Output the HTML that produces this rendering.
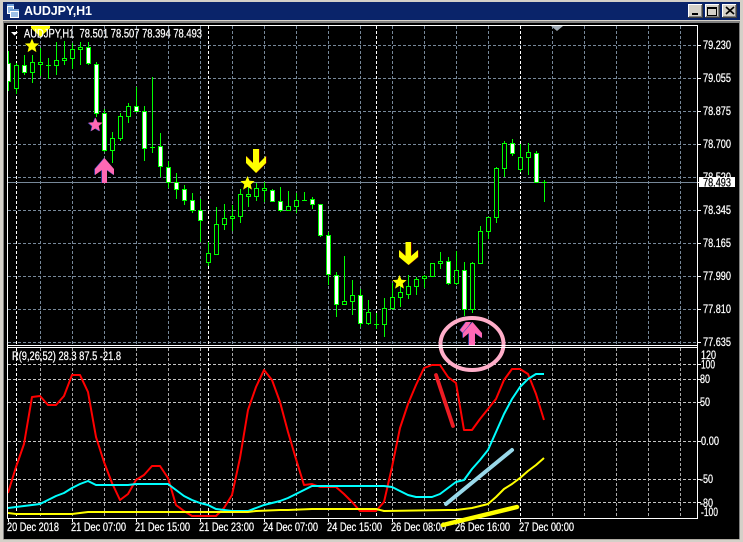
<!DOCTYPE html>
<html><head><meta charset="utf-8"><title>AUDJPY,H1</title>
<style>
html,body{margin:0;padding:0;width:743px;height:542px;overflow:hidden;background:#d4d0c8}
svg{display:block}
text{font-family:"Liberation Sans",sans-serif;font-size:11.500px;fill:#fff;stroke:#fff;stroke-width:.25px}
.c{shape-rendering:crispEdges}
</style></head><body>
<svg width="743" height="542" viewBox="0 0 743 542" xmlns="http://www.w3.org/2000/svg">
<defs>
<clipPath id="m"><rect x="8" y="26" width="689" height="319"/></clipPath>
<clipPath id="s"><rect x="8" y="348" width="689" height="170"/></clipPath>
<polygon id="star" points="0,-7.500 2,-2.750 7.130,-2.320 3.230,1.050 4.410,6.070 0,3.400 -4.410,6.070 -3.230,1.050 -7.130,-2.320 -2,-2.750"/>
</defs>
<rect width="743" height="542" fill="#d4d0c8"/>
<rect x="3" y="2" width="737" height="18" fill="#0a246a"/>
<rect x="3" y="20" width="737" height="1" fill="#d4d0c8"/>
<rect x="3" y="21" width="737" height="2" fill="#808080"/>
<rect x="3" y="22" width="1" height="517" fill="#808080"/>
<rect x="739" y="22" width="1" height="517" fill="#808080"/>
<rect x="4" y="23" width="735" height="516" fill="#000"/>
<rect x="3" y="539" width="737" height="1" fill="#b0aca4"/>

<!-- title icon -->
<g class="c">
<rect x="7" y="4" width="7" height="10" fill="#fff"/>
<rect x="7" y="4" width="7" height="2" fill="#6f9fd8"/>
<rect x="8" y="7" width="5" height="6" fill="#8fb7e4"/>
<rect x="10" y="9" width="9" height="9" fill="#fff"/>
<rect x="10" y="9" width="9" height="2" fill="#6f9fd8"/>
<rect x="11" y="12" width="7" height="5" fill="#9cc0e8"/>
</g>
<text x="24" y="15" textLength="68" style="font-weight:bold;font-size:12.500px;stroke-width:0">AUDJPY,H1</text>

<!-- buttons -->
<g class="c">
<rect x="688" y="4" width="15" height="14" fill="#404040"/><rect x="688" y="4" width="14" height="13" fill="#fff"/><rect x="689" y="5" width="13" height="12" fill="#808080"/><rect x="689" y="5" width="12" height="11" fill="#d4d0c8"/>
<rect x="692" y="13" width="6" height="2" fill="#000"/>
<rect x="705" y="4" width="15" height="14" fill="#404040"/><rect x="705" y="4" width="14" height="13" fill="#fff"/><rect x="706" y="5" width="13" height="12" fill="#808080"/><rect x="706" y="5" width="12" height="11" fill="#d4d0c8"/>
<path d="M707.500 8.500h9v7h-9z" fill="none" stroke="#000"/><rect x="707" y="7" width="10" height="2" fill="#000"/>
<rect x="722" y="4" width="15" height="14" fill="#404040"/><rect x="722" y="4" width="14" height="13" fill="#fff"/><rect x="723" y="5" width="13" height="12" fill="#808080"/><rect x="723" y="5" width="12" height="11" fill="#d4d0c8"/>
</g>
<path d="M726 7l8 7M734 7l-8 7" stroke="#000" stroke-width="1.700" fill="none"/>

<!-- grid main -->
<g class="c" clip-path="url(#m)" fill="none">
<path stroke="#778899" stroke-dasharray="3 2" d="M8 45.500H697M8 78.500H697M8 111.500H697M8 144.500H697M8 177.500H697M8 210.500H697M8 243.500H697M8 276.500H697M8 309.500H697M8 342.500H697"/>
<path stroke="#778899" stroke-dasharray="3 2" d="M40.500 26V345M72.500 26V345M104.500 26V345M136.500 26V345M168.500 26V345M200.500 26V345M232.500 26V345M264.500 26V345M296.500 26V345M328.500 26V345M360.500 26V345M392.500 26V345M424.500 26V345M456.500 26V345M488.500 26V345M552.500 26V345M584.500 26V345M616.500 26V345M648.500 26V345M680.500 26V345"/>
<path stroke="#fff" stroke-dasharray="3 2" d="M16.500 26V345M208.500 26V345M376.500 26V345M520.500 26V345"/>
<path stroke="#778899" d="M8 182.500H697"/>
</g>
<!-- grid sub -->
<g class="c" clip-path="url(#s)" fill="none">
<path stroke="#c4c4c4" stroke-dasharray="3 2" d="M8 364.500H697M8 379.500H697M8 402.500H697M8 441.500H697M8 479.500H697M8 502.500H697"/>
<path stroke="#a8a8a8" stroke-dasharray="3 2" d="M40.500 348V518M72.500 348V518M104.500 348V518M136.500 348V518M168.500 348V518M200.500 348V518M232.500 348V518M264.500 348V518M296.500 348V518M328.500 348V518M360.500 348V518M392.500 348V518M424.500 348V518M456.500 348V518M488.500 348V518M552.500 348V518M584.500 348V518M616.500 348V518M648.500 348V518M680.500 348V518"/>
<path stroke="#fff" stroke-dasharray="3 2" d="M16.500 348V518M208.500 348V518M376.500 348V518M520.500 348V518"/>
</g>

<!-- candles -->
<g class="c" clip-path="url(#m)">
<path fill="none" stroke="#00ff00" d="M8.500 51V91M16.500 63V94M24.500 55V75M32.500 55V83M40.500 48V76M48.500 58V79M56.500 42V75M64.500 41V65M72.500 43V69M80.500 42V65M88.500 42V65M96.500 62V117M104.500 109V152M112.500 132V163M120.500 113V141M128.500 103V123M136.500 87V112M144.500 106V161M152.500 77V153M160.500 133V177M168.500 161V188M176.500 173V199M184.500 185V205M192.500 193V213M200.500 199V242M208.500 242V266M216.500 207V254M224.500 204V230M232.500 205V231M240.500 189V223M248.500 187V207M256.500 183V201M264.500 182V202M272.500 189V202M280.500 187V212M288.500 191V211M296.500 193V213M304.500 192V201M312.500 197V209M320.500 204V237M328.500 232V285M336.500 272V317M344.500 256V305M352.500 280V315M360.500 289V327M368.500 300V325M376.500 313V329M384.500 298V337M392.500 283V310M400.500 280V307M408.500 275V299M416.500 277V295M424.500 275V288M432.500 263V277M440.500 252V269M448.500 257V285M456.500 251V285M464.500 262V316M472.500 262V313M480.500 226V263M488.500 217V239M496.500 167V223M504.500 141V177M512.500 139V156M520.500 144V172M528.500 143V175M536.500 151V183M544.500 180V202"/>
<path fill="none" stroke="#00ff00" d="M46 65.500h5M150 147.500h5M302 200.500h5M374 324.500h5M542 182.500h5"/>
<path fill="#000" stroke="#00ff00" d="M14.500 65.500h4v23h-4zM30.500 62.500h4v10h-4zM38.500 62.500h4v2h-4zM54.500 60.500h4v5h-4zM62.500 58.500h4v2h-4zM70.500 49.500h4v9h-4zM78.500 47.500h4v2h-4zM110.500 138.500h4v12h-4zM118.500 116.500h4v22h-4zM126.500 106.500h4v10h-4zM206.500 253.500h4v9h-4zM214.500 224.500h4v30h-4zM222.500 218.500h4v6h-4zM230.500 216.500h4v2h-4zM238.500 194.500h4v22h-4zM246.500 194.500h4v2h-4zM254.500 188.500h4v8h-4zM262.500 188.500h4v2h-4zM286.500 206.500h4v4h-4zM294.500 200.500h4v6h-4zM342.500 301.500h4v3h-4zM350.500 295.500h4v6h-4zM366.500 312.500h4v11h-4zM382.500 308.500h4v16h-4zM390.500 297.500h4v11h-4zM398.500 292.500h4v5h-4zM406.500 286.500h4v8h-4zM414.500 279.500h4v7h-4zM422.500 276.500h4v2h-4zM430.500 263.500h4v13h-4zM438.500 261.500h4v2h-4zM454.500 270.500h4v13h-4zM470.500 263.500h4v46h-4zM478.500 231.500h4v32h-4zM486.500 217.500h4v14h-4zM494.500 168.500h4v49h-4zM502.500 143.500h4v25h-4zM518.500 157.500h4v12h-4zM526.500 152.500h4v5h-4z"/>
<path fill="#fff" stroke="#00ff00" d="M6.500 63.500h4v18h-4zM22.500 65.500h4v7h-4zM86.500 47.500h4v16h-4zM94.500 64.500h4v49h-4zM102.500 113.500h4v37h-4zM134.500 106.500h4v5h-4zM142.500 111.500h4v37h-4zM158.500 146.500h4v20h-4zM166.500 167.500h4v15h-4zM174.500 182.500h4v7h-4zM182.500 189.500h4v11h-4zM190.500 200.500h4v10h-4zM198.500 210.500h4v10h-4zM270.500 190.500h4v11h-4zM278.500 201.500h4v9h-4zM310.500 199.500h4v5h-4zM318.500 204.500h4v31h-4zM326.500 235.500h4v39h-4zM334.500 275.500h4v29h-4zM358.500 295.500h4v28h-4zM446.500 261.500h4v22h-4zM462.500 270.500h4v39h-4zM510.500 143.500h4v10h-4zM534.500 153.500h4v29h-4z"/>
</g>

<!-- arrows & stars main -->
<g clip-path="url(#m)">
<polygon points="31,26 50,26 50,28 40.500,37 31,28" fill="#ffff00"/>
<use href="#star" transform="translate(32 46)" fill="#ffff00"/>
<use href="#star" transform="translate(94.800 125.300)" fill="#3a4ac0"/>
<use href="#star" transform="translate(95.500 125)" fill="#ff69b4"/>
<use href="#star" transform="translate(247.500 183.500)" fill="#ffff00"/>
<use href="#star" transform="translate(399.500 282.500)" fill="#ffff00"/>
<polygon points="104.500,158 114,169 114,175 107,170 107,183 102,183 102,170 95,175 95,169" fill="#3a4ac0" transform="translate(-.7 0)"/>
<polygon points="104.500,158 114,169 114,175 107,170 107,183 102,183 102,170 95,175 95,169" fill="#ff69b4"/>
<polygon points="253,149 259,149 259,163 266,156 266,163 256,173 246,163 246,156 253,163" fill="#800000" transform="translate(.7 0)"/>
<polygon points="253,149 259,149 259,163 266,156 266,163 256,173 246,163 246,156 253,163" fill="#ffff00"/>
<polygon points="405.500,242 411,242 411,256 418,250 418,257 408.500,265 399,257 399,250 405.500,256" fill="#800000" transform="translate(.7 0)"/>
<polygon points="405.500,242 411,242 411,256 418,250 418,257 408.500,265 399,257 399,250 405.500,256" fill="#ffff00"/>
<polygon points="551,26 563,26 557,31" fill="#a0aab4"/>
<polygon points="460,330 466,322 471,322 466,330 463,333" fill="#3a4ac0" transform="translate(-.7 0)"/>
<polygon points="460,330 466,322 471,322 466,330 463,333" fill="#ff69b4"/>
<polygon points="472.500,322 482,333 482,338 475,333 475,345 469,345 469,333 463,338 463,333" fill="#3a4ac0" transform="translate(-.7 0)"/>
<polygon points="472.500,322 482,333 482,338 475,333 475,345 469,345 469,333 463,338 463,333" fill="#ff69b4"/>
</g>

<!-- indicator lines -->
<g fill="none" stroke-linejoin="round" clip-path="url(#s)">
<polyline stroke="#ff0000" stroke-width="2" points="8,493 16,467 24,444 32,397 40,396 48,405 56,405 64,396 72,375 80,375 88,392 96,437 104,462 112,483 120,500 128,494 136,480 144,475 152,466 160,466 168,478 176,505 184,511 192,516 200,516 216,516 224,508 232,495 240,458 248,410 256,387 264,370 272,380 280,402 288,432 296,459 304,485 312,484 320,487 336,487 344,494 352,502 360,511 376,511 384,502 392,467 400,428 408,404 416,385 424,368 432,365 440,365 448,377 456,383 464,430 472,430 480,419 488,409 496,399 504,380 512,369 520,369 528,374 536,394 544,420"/>
<polyline stroke="#00ffff" stroke-width="2" points="8,508 16,507 24,506 32,505 40,504 48,500 56,496 64,493 72,488 80,484 88,481 96,485 128,485 136,484 168,484 176,490 184,496 192,500 200,503 208,505 216,509 224,510 232,511 248,511 256,508 264,505 272,503 280,501 288,498 296,494 304,490 312,486 384,486 392,487 400,491 408,495 416,497 432,497 440,494 448,488 456,482 464,480 472,469 480,460 488,450 496,432 504,414 512,399 520,387 528,379 536,374 544,374"/>
<polyline stroke="#ffff00" stroke-width="2" points="8,513 16,514 72,514 80,513 88,512 248,512 256,511 280,510 288,510 312,509 376,509 384,511 448,510 456,510 472,508 480,506 488,504 496,497 504,489 512,484 520,478 528,471 536,465 544,458"/>
</g>

<!-- hand drawn -->
<ellipse cx="472" cy="344" rx="31.500" ry="26" fill="none" stroke="#ffaec9" stroke-width="4"/>
<path d="M436 375L453 426" stroke="#ed1c24" stroke-width="3.800" stroke-linecap="round" fill="none"/>
<path d="M446 504L512 450" stroke="#99d9ea" stroke-width="4" stroke-linecap="round" fill="none"/>

<!-- borders -->
<g class="c" fill="#fff">
<rect x="7" y="25" width="691" height="1"/>
<rect x="7" y="25" width="1" height="494"/>
<rect x="697" y="25" width="1" height="494"/>
<rect x="7" y="345" width="691" height="1"/>
<rect x="7" y="347" width="691" height="1"/>
<rect x="7" y="518" width="691" height="1"/>
<path d="M698 45h3v1h-3zM698 78h3v1h-3zM698 111h3v1h-3zM698 144h3v1h-3zM698 210h3v1h-3zM698 243h3v1h-3zM698 276h3v1h-3zM698 309h3v1h-3zM698 342h3v1h-3zM698 364h3v1h-3zM698 379h3v1h-3zM698 402h3v1h-3zM698 441h3v1h-3zM698 479h3v1h-3zM698 502h3v1h-3zM8 519h1v3h-1zM72 519h1v3h-1zM136 519h1v3h-1zM200 519h1v3h-1zM264 519h1v3h-1zM328 519h1v3h-1zM392 519h1v3h-1zM456 519h1v3h-1zM520 519h1v3h-1z"/>
</g>

<!-- labels -->
<polygon points="11,32 18,32 14.500,35.500" fill="#fff"/>
<text x="24" y="37.500" textLength="178" lengthAdjust="spacingAndGlyphs">AUDJPY,H1&#160; 78.501 78.507 78.394 78.493</text>
<text x="12" y="360" textLength="109" lengthAdjust="spacingAndGlyphs">R(9,26,52) 28.3 87.5 -21.8</text>
<g>
<text x="703" y="49" textLength="28" lengthAdjust="spacingAndGlyphs">79.230</text>
<text x="703" y="82" textLength="28" lengthAdjust="spacingAndGlyphs">79.055</text>
<text x="703" y="115" textLength="28" lengthAdjust="spacingAndGlyphs">78.875</text>
<text x="703" y="148" textLength="28" lengthAdjust="spacingAndGlyphs">78.700</text>
<text x="703" y="181" textLength="28" lengthAdjust="spacingAndGlyphs">78.520</text>
<text x="703" y="214" textLength="28" lengthAdjust="spacingAndGlyphs">78.345</text>
<text x="703" y="247" textLength="28" lengthAdjust="spacingAndGlyphs">78.165</text>
<text x="703" y="280" textLength="28" lengthAdjust="spacingAndGlyphs">77.990</text>
<text x="703" y="313" textLength="28" lengthAdjust="spacingAndGlyphs">77.810</text>
<text x="703" y="346" textLength="28" lengthAdjust="spacingAndGlyphs">77.635</text>
</g>
<rect x="699" y="177" width="36" height="10" fill="#fff" class="c"/>
<rect x="698" y="182" width="2" height="1" fill="#fff" class="c"/>
<text x="703" y="186.500" textLength="28" lengthAdjust="spacingAndGlyphs" style="fill:#000;stroke:#000">78.493</text>
<g>
<text x="701" y="359" textLength="15" lengthAdjust="spacingAndGlyphs">120</text>
<text x="701" y="368.500" textLength="14" lengthAdjust="spacingAndGlyphs">100</text>
<text x="700" y="383" textLength="10" lengthAdjust="spacingAndGlyphs">80</text>
<text x="700" y="406" textLength="10" lengthAdjust="spacingAndGlyphs">50</text>
<text x="701" y="445" textLength="18" lengthAdjust="spacingAndGlyphs">0.00</text>
<text x="700" y="483" textLength="13" lengthAdjust="spacingAndGlyphs">-50</text>
<text x="700" y="507" textLength="13" lengthAdjust="spacingAndGlyphs">-80</text>
<text x="701" y="516" textLength="17" lengthAdjust="spacingAndGlyphs">-100</text>
</g>
<g>
<text x="7" y="531" textLength="52" lengthAdjust="spacingAndGlyphs">20 Dec 2018</text>
<text x="71" y="531" textLength="55" lengthAdjust="spacingAndGlyphs">21 Dec 07:00</text>
<text x="135" y="531" textLength="55" lengthAdjust="spacingAndGlyphs">21 Dec 15:00</text>
<text x="199" y="531" textLength="55" lengthAdjust="spacingAndGlyphs">21 Dec 23:00</text>
<text x="263" y="531" textLength="55" lengthAdjust="spacingAndGlyphs">24 Dec 07:00</text>
<text x="327" y="531" textLength="55" lengthAdjust="spacingAndGlyphs">24 Dec 15:00</text>
<text x="391" y="531" textLength="55" lengthAdjust="spacingAndGlyphs">26 Dec 08:00</text>
<text x="455" y="531" textLength="55" lengthAdjust="spacingAndGlyphs">26 Dec 16:00</text>
<text x="519" y="531" textLength="55" lengthAdjust="spacingAndGlyphs">27 Dec 00:00</text>
</g>
<path d="M443 525L517 507" stroke="#ffff00" stroke-width="4.500" stroke-linecap="round" fill="none"/>
</svg>
</body></html>
